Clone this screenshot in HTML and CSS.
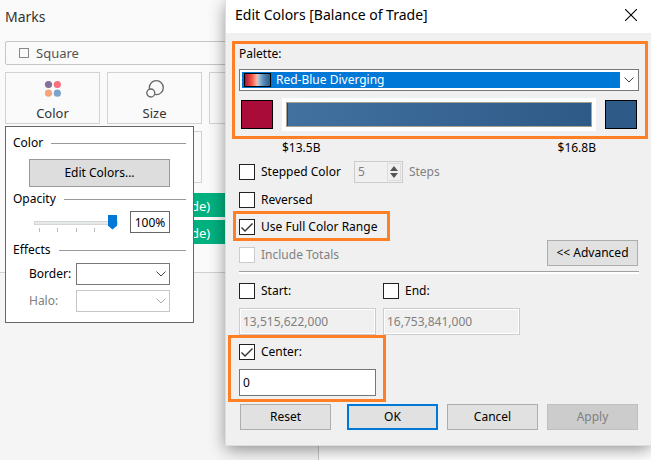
FILE: index.html
```html
<!DOCTYPE html>
<html lang="en">
<head>
<meta charset="utf-8">
<title>Edit Colors</title>
<link rel="stylesheet" href="styles.css">
</head>
<body>
<main class="workspace">
  <section class="marks">
    <div class="marks-card">
      <h2 class="marks-title">Marks</h2>
      <button class="mark-type" type="button"><span class="square-icon"></span>Square</button>
      <div class="shelf">
        <button class="tile" type="button">
          <svg width="18" height="18" viewBox="0 0 18 18"><circle cx="4.500" cy="4.500" r="3.600" fill="#83709b"/><circle cx="13.300" cy="4.500" r="3.600" fill="#fa6e7e"/><circle cx="4.500" cy="13.200" r="3.600" fill="#f4a57c"/><circle cx="13.300" cy="13.200" r="3.600" fill="#7ea3cb"/></svg>
          Color
        </button>
        <button class="tile" type="button">
          <svg width="18" height="18" viewBox="0 0 18 18" fill="#fafafa" stroke="#666" stroke-width="1.300"><circle cx="10.300" cy="7.700" r="7"/><circle cx="4.800" cy="13" r="4"/></svg>
          Size
        </button>
        <button class="tile" type="button" aria-label="Label"></button>
        <button class="tile" type="button" aria-label="Detail"></button>
        <button class="tile" type="button" aria-label="Tooltip"></button>
      </div>
      <div class="pill">de)</div>
      <div class="pill">de)</div>
    </div>
  </section>

  <section class="popup">
    <div class="group-title"><span>Color</span></div>
    <button class="btn edit-colors" type="button">Edit Colors...</button>
    <div class="group-title opacity-title"><label for="opacity">Opacity</label></div>
    <div class="opacity-row">
      <div class="slider">
        <input id="opacity" type="range" min="0" max="100" value="100">
        <div class="ticks"><i></i><i></i><i></i><i></i></div>
      </div>
      <input class="opacity-value" type="text" value="100%" aria-label="Opacity value">
    </div>
    <div class="group-title effects-title"><span>Effects</span></div>
    <div class="effect-row">
      <label for="border">Border:</label>
      <div class="combo">
        <select id="border"><option></option></select>
        <svg class="chevron" width="10" height="6" viewBox="0 0 10 6"><path d="M.5.5 5 5 9.500.5"/></svg>
      </div>
    </div>
    <div class="effect-row off">
      <label for="halo">Halo:</label>
      <div class="combo">
        <select id="halo" disabled><option></option></select>
        <svg class="chevron" width="10" height="6" viewBox="0 0 10 6"><path d="M.5.5 5 5 9.500.5"/></svg>
      </div>
    </div>
  </section>

  <section class="dialog" role="dialog" aria-labelledby="dialog-title">
    <header class="titlebar">
      <h1 id="dialog-title">Edit Colors [Balance of Trade]</h1>
      <button class="close" type="button" aria-label="Close"><svg width="12" height="12" viewBox="0 0 12 12"><path d="M0 0 12 12M12 0 0 12" stroke="#000" stroke-width="1.100"/></svg></button>
    </header>

    <div class="highlight palette">
      <label for="palette">Palette:</label>
      <div class="palette-combo">
        <select id="palette"><option>Red-Blue Diverging</option></select>
        <span class="palette-preview"></span>
        <svg class="chevron" width="10" height="6" viewBox="0 0 10 6"><path d="M.5.5 5 5 9.500.5"/></svg>
      </div>
      <div class="ramp-row">
        <button class="swatch low" type="button" aria-label="Low color"></button>
        <div class="ramp"><div class="ramp-fill"></div></div>
        <button class="swatch high" type="button" aria-label="High color"></button>
      </div>
    </div>
    <div class="range-labels"><span>$13.5B</span><span>$16.8B</span></div>

    <div class="options-area">
      <div class="options">
        <div class="option">
          <input id="stepped" type="checkbox"><label for="stepped">Stepped Color</label>
          <div class="spinner">
            <input id="steps" type="text" value="5" disabled>
            <span class="arrows">
              <svg width="8" height="5" viewBox="0 0 8 5"><path d="M0 5 4 0 8 5Z"/></svg>
              <svg width="8" height="5" viewBox="0 0 8 5"><path d="M0 0 4 5 8 0Z"/></svg>
            </span>
          </div>
          <label class="muted" for="steps">Steps</label>
        </div>
        <div class="option reversed"><input id="reversed" type="checkbox"><label for="reversed">Reversed</label></div>
        <div class="option highlight full-range"><input id="full" type="checkbox" checked><label for="full">Use Full Color Range</label></div>
        <div class="option totals"><input id="totals" type="checkbox" disabled><label class="muted" for="totals">Include Totals</label></div>
      </div>
      <button class="btn" type="button">&lt;&lt; Advanced</button>
    </div>

    <div class="limits">
      <div class="limit">
        <div class="option"><input id="start" type="checkbox"><label for="start">Start:</label></div>
        <input class="field" type="text" value="13,515,622,000" aria-label="Start value" disabled>
      </div>
      <div class="limit">
        <div class="option"><input id="end" type="checkbox"><label for="end">End:</label></div>
        <input class="field" type="text" value="16,753,841,000" aria-label="End value" disabled>
      </div>
    </div>
    <div class="limit highlight center">
      <div class="option"><input id="center" type="checkbox" checked><label for="center">Center:</label></div>
      <input class="field" type="text" value="0" aria-label="Center value">
    </div>

    <footer class="actions">
      <button class="btn reset" type="button">Reset</button>
      <button class="btn primary" type="button">OK</button>
      <button class="btn" type="button">Cancel</button>
      <button class="btn" type="button" disabled>Apply</button>
    </footer>
  </section>
</main>
</body>
</html>
```
FILE: styles.css
```css
* { box-sizing: border-box; }

body {
  margin: 0;
  background: #fff;
  color: #000;
  font: 13px/18px "Noto Sans", "Open Sans", sans-serif;
}

button, input, select { font: inherit; color: inherit; margin: 0; border-radius: 0; }
svg, input, select { display: block; }

.workspace { position: relative; min-height: 100vh; display: flex; overflow: hidden; }

/* Marks pane */
.marks { width: 319px; background: #f5f5f5; border-right: 1px solid #c8c8c8; }
.marks-card { height: 273px; padding: 6px 0 0 5px; background: #fafafa; border-bottom: 1px solid #d0d0d0; }
.marks-title { margin: 0 0 13px; font-size: 14px; line-height: 22px; font-weight: 400; color: #333; }
.mark-type {
  display: flex; align-items: center; gap: 7px;
  width: 100%; height: 24px; padding: 0 13px;
  border: 1px solid #c6c6c6; border-radius: 2px; background: #fafafa; color: #555;
}
.square-icon { width: 10px; height: 10px; border: 1px solid #888; }
.shelf { display: grid; grid-template-columns: repeat(3, 95px); gap: 7px; margin: 7px 0 10px; }
.tile {
  display: flex; flex-direction: column; align-items: center; gap: 6px;
  height: 52px; padding: 7px 0 0;
  border: 1px solid #d2d2d2; background: #fafafa; color: #333;
}
.pill { height: 24px; margin-bottom: 3px; padding-left: 186px; background: #00b180; color: #fff; line-height: 26px; }

/* Color popup */
.popup {
  position: absolute; left: 5px; top: 126px; width: 189px;
  padding: 7px 7px 10px; border: 1px solid #666; background: #fff; font-size: 12px;
}
.group-title { display: flex; align-items: center; gap: 8px; }
.group-title::after { content: ""; flex: 1; border-top: 1px solid #999; }
.opacity-title { margin-top: 3px; }
.effects-title { margin: 8px 0 4px; }

.btn {
  display: block; width: 91px; height: 26px; padding: 0;
  border: 1px solid #adadad; background: #e1e1e1; line-height: 18px;
}
.btn.edit-colors { width: 141px; height: 28px; margin: 7px 0 0 16px; background: #ddd; border-color: #999; }

.opacity-row { display: flex; justify-content: space-between; padding: 3px 16px 0 21px; }
.slider { width: 84px; padding-top: 4px; }
.slider input { width: 100%; height: 15px; appearance: none; background: none; }
.slider input::-webkit-slider-runnable-track { height: 4px; border: 1px solid #d6d6d6; background: #e7eaea; }
.slider input::-webkit-slider-thumb {
  appearance: none; width: 9px; height: 15px; margin-top: -7px; background: #0078d7;
  clip-path: polygon(0 0, 100% 0, 100% 75%, 50% 100%, 0 75%);
}
.ticks { display: flex; justify-content: space-between; width: 56px; height: 4px; margin: -2px 0 0 5px; }
.ticks i { width: 1px; background: #bbb; }
.opacity-value { width: 40px; height: 22px; padding: 0 2px; border: 1px solid #666; text-align: center; }

.effect-row { display: flex; justify-content: space-between; align-items: center; padding: 0 16px; margin-bottom: 5px; }
.effect-row:last-child { margin-bottom: 0; }
.effect-row.off { color: #808080; }
.combo { position: relative; width: 94px; }
.combo select { width: 100%; height: 22px; appearance: none; border: 1px solid #777; background: #fff; opacity: 1; }
.chevron { position: absolute; right: 4px; top: 8px; fill: none; stroke: #444; pointer-events: none; }
.off .combo select { border-color: #c6c6c6; }
.off .chevron { stroke: #aaa; }

/* Edit Colors dialog */
.dialog {
  position: absolute; left: 226px; right: 0; top: 0;
  padding-bottom: 15px; background: #f0f0f0; font-size: 12px;
  box-shadow: 0 0 0 1px #ddd, 0 4px 16px rgba(0, 0, 0, .45);
}
.titlebar { display: flex; justify-content: space-between; align-items: center; height: 33px; padding: 0 14px 4px 9px; background: #fff; }
.titlebar h1 { margin: 0; font: 400 14px/20px "Noto Sans", sans-serif; }
.close { padding: 0; border: 0; background: none; }

.highlight { border: 3px solid #ff8024; }
.palette { margin: 8px 3px 0 6px; padding: 0 6px 5px 4px; }
.palette label { display: block; line-height: 20px; }
.palette-combo { position: relative; height: 22px; margin: 5px 0 7px; padding: 2px 18px 2px 2px; border: 1px solid #777; background: #fff; }
.palette-combo select { width: 100%; height: 16px; padding: 0 0 0 34px; appearance: none; border: 0; background: #0078d7; color: #fff; line-height: 16px; }
.palette-preview {
  position: absolute; left: 4px; top: 3px; width: 27px; height: 14px; border: 1px solid #000;
  background: linear-gradient(90deg, #b0123d, #ee4d3e 25%, #ffb6a2 48%, #a8cbe0 52%, #5688b2 75%, #2e5a87);
}
.palette-combo .chevron { top: 7px; }
.ramp-row { display: flex; align-items: center; gap: 9px; padding: 0 2px; }
.swatch { width: 32px; height: 29px; padding: 0; border: 1px solid #000; }
.low { background: #a90c38; }
.high { background: #2e5a87; }
.ramp { flex: 1; height: 33px; padding: 4px; background: #fff; }
.ramp-fill { height: 25px; border: 1px solid #a9a090; background: linear-gradient(90deg, #a90c38 1px, #4271a0 1px, #2e5a87); }
.range-labels { display: flex; justify-content: space-between; margin: 0 55px 4px 56px; }

.options-area {
  display: flex; justify-content: space-between; align-items: flex-end;
  margin: 0 12px 6px 7px; padding: 0 1px 8px 0; position: relative;
}
.options-area::after {
  content: ""; position: absolute; left: 6px; right: 0; bottom: 0; height: 2px;
  border-top: 1px solid #a0a0a0; background: #fff;
}
.option { display: flex; align-items: center; gap: 6px; height: 22px; }
.options .option { padding-left: 6px; }
.options .reversed { margin-top: 6px; }
.options .full-range { width: max-content; height: 30px; padding: 2px 10px 0 3px; }
.options .totals { margin-top: 3px; }
.muted { color: #808080; }

input[type="checkbox"] { width: 16px; height: 16px; appearance: none; border: 1px solid #222; background: #fff; }
input[type="checkbox"]:disabled { border-color: #ccc; }
input[type="checkbox"]:checked::before {
  content: ""; display: block; width: 14px; height: 14px; background: #333;
  clip-path: polygon(1px 8px, 2px 7px, 5px 10px, 12px 3px, 13px 4px, 5px 12px);
}

.spinner { display: flex; width: 49px; height: 22px; margin-left: 7px; padding: 1px; border: 1px solid #ccc; }
.spinner input { width: 31px; padding: 0 2px; border: 0; background: none; color: #808080; }
.arrows { display: flex; flex: 1; flex-direction: column; align-items: center; justify-content: space-evenly; border: 1px solid #ddd; fill: #555; }

.limits { display: flex; gap: 7px; margin-left: 13px; }
.limit { width: 137px; }
.field { width: 100%; height: 27px; margin-top: 6px; padding: 0 3px; border: 1px solid #777; background: #fff; }
.field:disabled { border-color: #ccc; background: #f0f0f0; color: #808080; box-shadow: inset 0 0 0 1px #fff; }
.limit.center { width: 158px; margin-left: 2px; padding: 3px 7px 3px 8px; }

.actions { display: flex; justify-content: flex-end; gap: 9px; margin: 2px 13px 0 0; }
.reset { margin-right: 7px; }
.primary { border: 2px solid #0078d7; }
.btn:disabled { border-color: #bfbfbf; background: #ccc; color: #808080; }
```
